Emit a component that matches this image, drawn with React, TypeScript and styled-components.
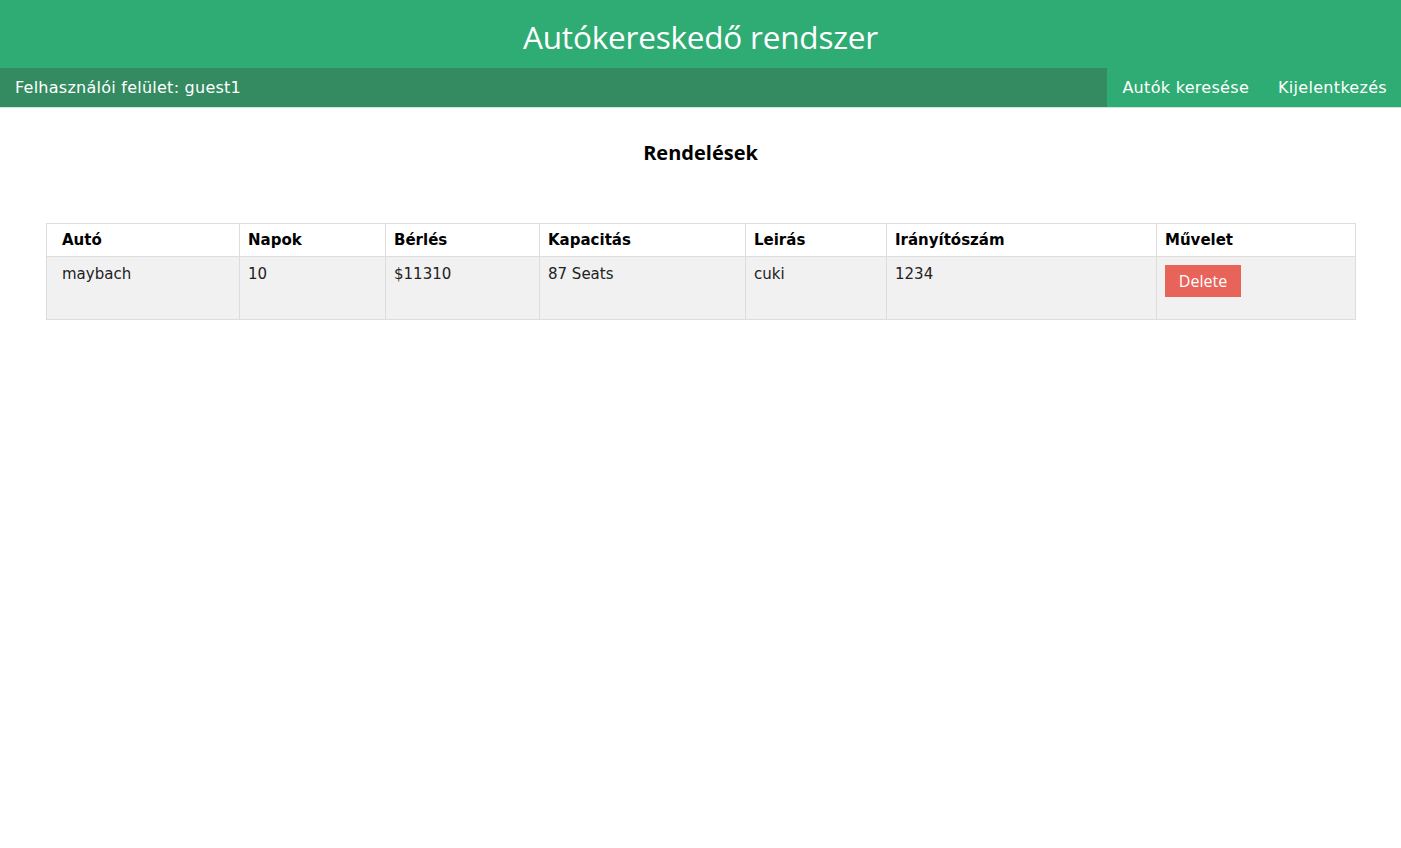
import React from "react";
import styled, { createGlobalStyle } from "styled-components";

const Global = createGlobalStyle`
  html, body { margin: 0; padding: 0; background: #fff; }
  body { font-family: "DejaVu Sans", Verdana, sans-serif; }
`;

const Header = styled.header`
  background: #2fac73;
  height: 68px;
  display: flex;
  align-items: center;
  justify-content: center;
`;

const Title = styled.h1`
  margin: 0;
  font-family: "Open Sans", "Noto Sans", sans-serif;
  font-weight: 400;
  font-size: 31.5px;
  color: #fff;
  letter-spacing: -0.2px;
  padding-top: 4px;
`;

const Nav = styled.nav`
  display: flex;
  height: 39px;
  background: #2fac73;
  border-bottom: 1px solid #cfe6da;
`;

const UserBox = styled.div`
  flex: 1;
  background: #348b61;
  display: flex;
  align-items: center;
  padding-left: 15px;
  color: #fff;
  font-size: 16px;
  letter-spacing: 0.25px;
`;

const NavLinks = styled.div`
  display: flex;
  align-items: center;
  padding: 0 14px 0 15px;
  gap: 29px;
`;

const NavLink = styled.a`
  color: #fff;
  font-size: 16px;
  letter-spacing: 0.3px;
  text-decoration: none;
  cursor: pointer;
`;

const Main = styled.main`
  padding: 0 46px;
`;

const PageTitle = styled.h2`
  margin: 33px 0 58px;
  text-align: center;
  font-family: "Open Sans", "Noto Sans", sans-serif;
  font-weight: 700;
  font-size: 20px;
  color: #000;
  line-height: 24px;
`;

const Table = styled.table`
  width: 100%;
  border-collapse: collapse;
  table-layout: fixed;
  font-size: 15px;
  border: 1px solid #dddddd;
`;

const Th = styled.th<{ $first?: boolean }>`
  text-align: left;
  font-weight: 700;
  color: #000;
  height: 32px;
  padding: 0 8px 0 ${(p) => (p.$first ? "15px" : "8px")};
  border: 1px solid #dddddd;
  background: #fff;
`;

const Td = styled.td<{ $first?: boolean }>`
  vertical-align: top;
  color: #222;
  height: 63px;
  box-sizing: border-box;
  padding: 8px 8px 0 ${(p) => (p.$first ? "15px" : "8px")};
  border: 1px solid #dddddd;
  background: #f1f1f1;
`;

const DeleteButton = styled.button`
  background: #e8635a;
  color: #fff;
  border: none;
  font-family: "Open Sans", "Noto Sans", sans-serif;
  font-size: 16px;
  width: 76px;
  height: 32px;
  padding: 0;
  cursor: pointer;
`;

const cols = [193, 146, 154, 206, 141, 270, 199];
const heads = ["Autó", "Napok", "Bérlés", "Kapacitás", "Leirás", "Irányítószám", "Művelet"];

export default function App() {
  return (
    <>
      <Global />
      <Header>
        <Title>Autókereskedő rendszer</Title>
      </Header>
      <Nav>
        <UserBox>Felhasználói felület: guest1</UserBox>
        <NavLinks>
          <NavLink>Autók keresése</NavLink>
          <NavLink>Kijelentkezés</NavLink>
        </NavLinks>
      </Nav>
      <Main>
        <PageTitle>Rendelések</PageTitle>
        <Table>
          <colgroup>
            {cols.map((w, i) => (
              <col key={i} style={{ width: w }} />
            ))}
          </colgroup>
          <thead>
            <tr>
              {heads.map((h, i) => (
                <Th key={h} $first={i === 0}>{h}</Th>
              ))}
            </tr>
          </thead>
          <tbody>
            <tr>
              <Td $first>maybach</Td>
              <Td>10</Td>
              <Td>$11310</Td>
              <Td>87 Seats</Td>
              <Td>cuki</Td>
              <Td>1234</Td>
              <Td>
                <DeleteButton>Delete</DeleteButton>
              </Td>
            </tr>
          </tbody>
        </Table>
      </Main>
    </>
  );
}
